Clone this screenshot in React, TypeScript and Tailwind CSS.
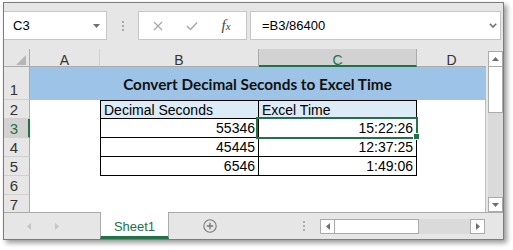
import React from "react";

function TriUp() {
  return (
    <svg width="7" height="4" viewBox="0 0 7 4"><path d="M0 4 L3.5 0 L7 4 Z" fill="#6f6f6f" /></svg>
  );
}
function TriDown() {
  return (
    <svg width="7" height="4" viewBox="0 0 7 4"><path d="M0 0 L7 0 L3.5 4 Z" fill="#6f6f6f" /></svg>
  );
}
function TriLeft({ c = "#6f6f6f" }: { c?: string }) {
  return (
    <svg width="4" height="7" viewBox="0 0 4 7"><path d="M4 0 L4 7 L0 3.5 Z" fill={c} /></svg>
  );
}
function TriRight({ c = "#6f6f6f" }: { c?: string }) {
  return (
    <svg width="4" height="7" viewBox="0 0 4 7"><path d="M0 0 L0 7 L4 3.5 Z" fill={c} /></svg>
  );
}

export default function App() {
  return (
    <div className="w-[513px] h-[250px] bg-white overflow-hidden font-['Liberation_Sans',Arial,sans-serif] text-black">
      <div className="ml-[3px] mt-[2px] w-[501px] h-[238px] border border-[#7c7c7c] bg-[#e6e6e6] flex flex-col shadow-[3px_3px_5px_rgba(0,0,0,0.4)]">
        {/* toolbar */}
        <div className="h-[46px] shrink-0 flex items-start pt-[8px]">
          <div className="w-[103px] h-[29px] bg-white border border-l-0 border-[#c6c6c6] flex items-center justify-between pl-[9px] pr-[6px]">
            <span className="text-[13px] leading-none">C3</span>
            <TriDown />
          </div>
          <div className="ml-[14px] w-[3px] h-[29px] flex flex-col items-center justify-center gap-[2px]">
            <div className="w-[2px] h-[2px] bg-[#a8a8a8]" />
            <div className="w-[2px] h-[2px] bg-[#a8a8a8]" />
            <div className="w-[2px] h-[2px] bg-[#a8a8a8]" />
          </div>
          <div className="ml-[14px] w-[109px] h-[29px] bg-white border border-[#c6c6c6] flex items-center pl-[2px]">
            <div className="w-[34px] flex justify-center">
              <svg width="10" height="10" viewBox="0 0 10 10">
                <path d="M1 1 L9 9 M9 1 L1 9" stroke="#a8a8a8" strokeWidth="1.3" fill="none" />
              </svg>
            </div>
            <div className="w-[34px] flex justify-center">
              <svg width="12" height="10" viewBox="0 0 12 10">
                <path d="M1 5 L4.5 8.5 L11 1.5" stroke="#a8a8a8" strokeWidth="1.5" fill="none" />
              </svg>
            </div>
            <div className="w-[34px] flex justify-center">
              <span className="font-['Liberation_Serif',serif] italic text-[15px] leading-none text-[#444]">
                f<span className="text-[11px]">x</span>
              </span>
            </div>
          </div>
          <div className="ml-[3px] w-[251px] h-[29px] bg-white border border-[#c6c6c6] flex items-center justify-between pl-[11px] pr-[3px]">
            <span className="text-[13px] leading-none">=B3/86400</span>
            <svg width="8" height="5" viewBox="0 0 8 5">
              <path d="M0.8 0.8 L4 4 L7.2 0.8" stroke="#6f6f6f" strokeWidth="1.6" fill="none" />
            </svg>
          </div>
        </div>

        {/* grid area */}
        <div className="h-[163px] shrink-0 flex">
          <div className="relative w-[482px] bg-white">
            <div className="grid grid-cols-[26px_70px_159px_158px_69px] grid-rows-[18px_33px_19px_19px_19px_19px_19px_17px] text-[14px] leading-[16px]">
              {/* header row */}
              <div className="bg-[#e6e6e6] border-r border-b border-[#ababab] flex items-end justify-end pr-[3px] pb-[1px]">
                <svg width="10" height="10" viewBox="0 0 10 10"><path d="M10 0 L10 10 L0 10 Z" fill="#b6b6b6" /></svg>
              </div>
              <div className="bg-[#e6e6e6] border-r border-[#d0d0d0] border-b border-b-[#ababab] flex justify-center pt-[3px] text-[#333]">A</div>
              <div className="bg-[#e6e6e6] border-r border-[#ababab] border-b border-b-[#ababab] flex justify-center pt-[3px] text-[#333]">B</div>
              <div className="bg-[#d2d2d2] border-r border-[#ababab] border-b-2 border-b-[#217346] flex justify-center pt-[3px] text-[#217346]">C</div>
              <div className="bg-[#e6e6e6] border-b border-[#ababab] flex justify-center pt-[3px] text-[#333]">D</div>

              {/* row 1 */}
              <div className="bg-[#e6e6e6] border-r border-[#ababab] border-b border-b-[#d0d0d0] flex justify-center pr-[5px] pt-[15px] text-[15px] text-[#333]">1</div>
              <div className="col-span-4 bg-[#9dc3e6] border-r border-[#bdbdbd] flex justify-center pt-[7px]">
                <span className="font-['Lato',sans-serif] font-bold text-[15.3px] leading-[20px] text-[#111]">Convert Decimal Seconds to Excel Time</span>
              </div>

              {/* row 2 */}
              <div className="bg-[#e6e6e6] border-r border-[#ababab] border-b border-b-[#d0d0d0] flex justify-center pr-[5px] pt-[2px] text-[15px] text-[#333]">2</div>
              <div />
              <div className="bg-[#ddebf7] border border-black pl-[3px] pt-[1px] whitespace-nowrap">Decimal Seconds</div>
              <div className="bg-[#ddebf7] border-y border-r border-black pl-[3px] pt-[1px] whitespace-nowrap">Excel Time</div>
              <div className="border-r border-[#bdbdbd]" />

              {/* rows 3-5 */}
              {[
                ["3", "55346", "15:22:26"],
                ["4", "45445", "12:37:25"],
                ["5", "6546", "1:49:06"],
              ].map(([r, b, c]) => (
                <React.Fragment key={r}>
                  {r === "3" ? (
                    <div className="bg-[#d2d2d2] border-r-2 border-[#217346] border-b border-b-[#d0d0d0] flex justify-center pr-[4px] pt-[2px] text-[15px] text-[#217346]">{r}</div>
                  ) : (
                    <div className="bg-[#e6e6e6] border-r border-[#ababab] border-b border-b-[#d0d0d0] flex justify-center pr-[5px] pt-[2px] text-[15px] text-[#333]">{r}</div>
                  )}
                  <div />
                  <div className="border-x border-b border-black flex justify-end pr-[3px] pt-[1px]">{b}</div>
                  <div className="border-r border-b border-black flex justify-end pr-[3px] pt-[1px]">{c}</div>
                  <div className="border-r border-[#bdbdbd]" />
                </React.Fragment>
              ))}

              {/* rows 6-7 */}
              {["6", "7"].map((r) => (
                <React.Fragment key={r}>
                  <div className={`bg-[#e6e6e6] border-r border-[#ababab] flex justify-center pr-[5px] pt-[2px] text-[15px] text-[#333] ${r === "6" ? "border-b border-b-[#d0d0d0]" : ""}`}>{r}</div>
                  <div />
                  <div />
                  <div />
                  <div className="border-r border-[#bdbdbd]" />
                </React.Fragment>
              ))}
            </div>

            {/* selection */}
            <div className="absolute left-[252px] top-[68px] w-[162px] h-[22px] border-2 border-[#217346] pointer-events-none" />
            <div className="absolute left-[409px] top-[84px] w-[7px] h-[7px] bg-[#217346] border border-white" />
          </div>
          <div className="w-[2px]" />
          {/* vertical scrollbar */}
          <div className="w-[15px] flex flex-col pt-[2px]">
            <div className="h-[16px] bg-white border border-[#ababab] flex items-center justify-center">
              <TriUp />
            </div>
            <div className="h-[47px] -mt-px bg-white border border-[#ababab]" />
            <div className="flex-1 bg-[#dadada]" />
            <div className="h-[15px] bg-white border border-[#ababab] flex items-center justify-center">
              <TriDown />
            </div>
          </div>
        </div>

        {/* tab bar */}
        <div className="h-[27px] shrink-0 border-t border-[#ababab] flex items-start">
          <div className="w-[96px] h-[26px] flex items-center">
            <div className="ml-[23px]"><TriLeft c="#c4c4c4" /></div>
            <div className="ml-[24px]"><TriRight c="#c4c4c4" /></div>
          </div>
          <div className="w-[69px] h-[27px] -mt-px bg-white border-x border-[#ababab] border-b-[3px] border-b-[#217346] flex justify-center pt-[7px]">
            <span className="text-[13px] leading-[15px] text-[#217346]">Sheet1</span>
          </div>
          <div className="ml-[34px] h-[26px] flex items-center">
            <svg width="14" height="14" viewBox="0 0 14 14">
              <circle cx="7" cy="7" r="6.2" stroke="#7a7a7a" strokeWidth="1.1" fill="none" />
              <path d="M7 3.8 V10.2 M3.8 7 H10.2" stroke="#7a7a7a" strokeWidth="1.4" />
            </svg>
          </div>
          <div className="ml-[86px] h-[26px] flex flex-col items-center justify-center gap-[2px]">
            <div className="w-[2px] h-[2px] bg-[#b0b0b0]" />
            <div className="w-[2px] h-[2px] bg-[#b0b0b0]" />
            <div className="w-[2px] h-[2px] bg-[#b0b0b0]" />
          </div>
          <div className="ml-[15px] mt-[6px] h-[15px] flex">
            <div className="w-[15px] bg-white border border-[#ababab] flex items-center justify-center">
              <TriLeft />
            </div>
            <div className="w-[85px] -ml-px bg-white border border-[#ababab]" />
            <div className="w-[51px] bg-[#dadada]" />
            <div className="w-[15px] bg-white border border-[#ababab] flex items-center justify-center">
              <TriRight />
            </div>
          </div>
        </div>
      </div>
    </div>
  );
}
